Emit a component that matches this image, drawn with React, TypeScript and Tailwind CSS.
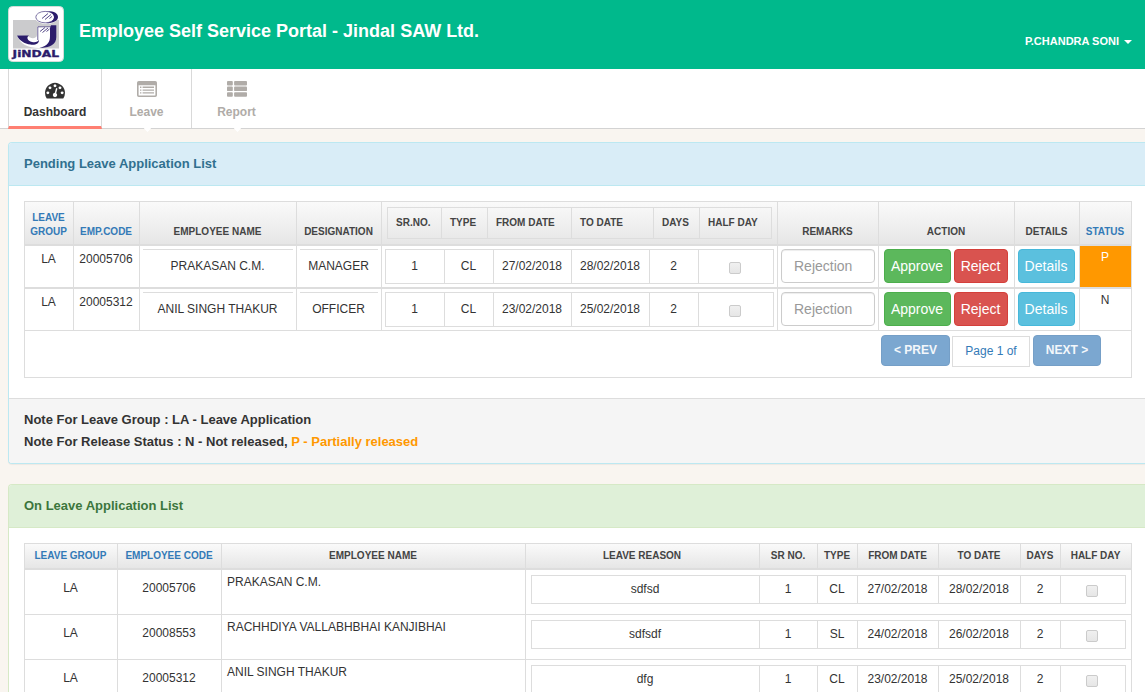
import type { ReactNode } from "react";

const LINE = "border-[#dddddd]";

function Logo() {
  return (
    <svg width="56" height="56" viewBox="0 0 56 56" className="block">
      <rect x="0.5" y="0.5" width="55" height="55" rx="4" fill="#ffffff" stroke="#d3dcd9" />
      <rect x="5" y="14" width="46" height="28.5" fill="#cbcbcd" />
      <ellipse cx="38.5" cy="11.2" rx="11.5" ry="6.8" fill="#ffffff" />
      <path d="M38 5C46 4.6 50.2 7.6 50 11.2C49.8 14.8 45.6 17.2 38 17.2C43.4 16.2 46 14 46 11.2C46 8 43 5.8 38 5Z" fill="#2b1c6b" />
      <ellipse cx="37.2" cy="11.1" rx="9.4" ry="5.7" fill="none" stroke="#2b1c6b" strokeWidth="0.6" />
      <path d="M34 12.5L40 7.5M37 13.5L43 8.5M41.5 12.5L44 10.4" stroke="#2b1c6b" strokeWidth="0.8" />
      <path d="M29 20.5H48V31C48 38.5 42 42 31 42C20 42 12 38 9 29.5L20 30C22 33 29 33 29 29Z" fill="#ffffff" />
      <path d="M43 19.2H48.3V31C48.3 38.5 42 42 31.5 42C40 39.5 42 36 42 30V22Z" fill="#2b1c6b" />
      <path d="M9 29.4H21C18 31 19.5 35 24 36C27.5 36.7 30.2 35.8 31 33.8C31.4 37.4 27.4 39.4 22.5 38.6C16.4 37.6 11 34.4 9 29.4Z" fill="#2b1c6b" />
      <path d="M29.8 34V20.8H43" fill="none" stroke="#2b1c6b" strokeWidth="0.7" />
      <path d="M32 25.5L37 21.5M34.5 26.5L40 22M38.5 25.5L41.5 23" stroke="#2b1c6b" strokeWidth="0.8" />
      <text x="4.6" y="51.3" textLength="46.5" lengthAdjust="spacingAndGlyphs" fill="#2b1c6b" stroke="#2b1c6b" strokeWidth="0.3" className="font-['DejaVu_Sans','Liberation_Sans',sans-serif] text-[8px] font-bold">
        JiNDAL
      </text>
    </svg>
  );
}

function GaugeIcon() {
  return (
    <svg width="20" height="20" viewBox="0 0 1792 1792" fill="currentColor" className="block">
      <path d="M384 1152q0-53-37.5-90.5t-90.5-37.5-90.5 37.5-37.5 90.5 37.5 90.5 90.5 37.5 90.5-37.5 37.5-90.5zm192-448q0-53-37.5-90.5t-90.5-37.5-90.5 37.5-37.5 90.5 37.5 90.5 90.5 37.5 90.5-37.5 37.5-90.5zm428 481l101-382q6-26-7.5-48.5t-38.5-29.5-48 6.5-30 39.5l-101 382q-60 5-107 43.5t-63 98.5q-20 77 20 146t117 89 146-20 89-117q16-60-6-117t-72-91zm660-33q0-53-37.5-90.5t-90.5-37.5-90.5 37.5-37.5 90.5 37.5 90.5 90.5 37.5 90.5-37.5 37.5-90.5zm-640-640q0-53-37.5-90.5t-90.5-37.5-90.5 37.5-37.5 90.5 37.5 90.5 90.5 37.5 90.5-37.5 37.5-90.5zm448 192q0-53-37.5-90.5t-90.5-37.5-90.5 37.5-37.5 90.5 37.5 90.5 90.5 37.5 90.5-37.5 37.5-90.5zm320 448q0 261-141 483-19 29-54 29h-1402q-35 0-54-29-141-221-141-483 0-182 71-348t191-286 286-191 348-71 348 71 286 191 191 286 71 348z" />
    </svg>
  );
}

function ListAltIcon() {
  return (
    <svg width="20" height="20" viewBox="0 0 20 20" fill="currentColor" className="block">
      <path fillRule="evenodd" d="M1.8 1H18.2Q20 1 20 2.8V15.2Q20 17 18.2 17H1.8Q0 17 0 15.2V2.8Q0 1 1.8 1ZM1.6 5.2V14.9Q1.6 15.5 2.2 15.5H17.8Q18.4 15.5 18.4 14.9V5.2Z" />
      <path d="M3 6.6H4.4V8H3ZM3 9.4H4.4V10.8H3ZM3 12.2H4.4V13.6H3ZM5.6 6.6H17V8H5.6ZM5.6 9.4H17V10.8H5.6ZM5.6 12.2H17V13.6H5.6Z" />
    </svg>
  );
}

function ThListIcon() {
  return (
    <svg width="20" height="20" viewBox="0 0 20 20" fill="currentColor" className="block">
      {[1, 6.6, 12.2].map((y) => (
        <g key={y}>
          <rect x="0" y={y} width="5.8" height="4.5" rx="0.9" />
          <rect x="7.1" y={y} width="12.9" height="4.5" rx="0.9" />
        </g>
      ))}
    </svg>
  );
}

function CheckBox() {
  return (
    <span className="block h-3 w-3 rounded-[2px] border border-[#cbcbcb] bg-gradient-to-b from-[#f0f0f0] to-[#e6e6e6]" />
  );
}

function Th({ children, blue, className = "" }: { children: ReactNode; blue?: boolean; className?: string }) {
  return (
    <div className={`flex items-end justify-center border-r pr-px ${LINE} text-center ${blue ? "text-[#337ab7]" : ""} ${className}`}>
      {children}
    </div>
  );
}

const pending = [
  { code: "20005706", name: "PRAKASAN C.M.", role: "MANAGER", from: "27/02/2018", to: "28/02/2018", status: "P" },
  { code: "20005312", name: "ANIL SINGH THAKUR", role: "OFFICER", from: "23/02/2018", to: "25/02/2018", status: "N" },
];

const onLeave = [
  { code: "20005706", name: "PRAKASAN C.M.", reason: "sdfsd", type: "CL", from: "27/02/2018", to: "28/02/2018" },
  { code: "20008553", name: "RACHHDIYA VALLABHBHAI KANJIBHAI", reason: "sdfsdf", type: "SL", from: "24/02/2018", to: "26/02/2018" },
  { code: "20005312", name: "ANIL SINGH THAKUR", reason: "dfg", type: "CL", from: "23/02/2018", to: "25/02/2018" },
];

const PENDING_COLS = "grid grid-cols-[49px_66px_157px_85px_396px_101px_136px_65px_52px]";
const LEAVE_COLS = "grid grid-cols-[93px_104px_304px_234px_58px_40px_81px_82px_40px_71px]";
const HEAD = "border-b-2 bg-gradient-to-b from-[#fafafa] to-[#e6e6e6] text-[10px] font-bold text-[#444444]";
const BTN = "h-[34px] shrink-0 rounded-[4px] border pr-px text-center text-[14px] leading-[33px] text-white";

function PendingTable() {
  return (
    <div className={`w-[1108px] border-l border-t ${LINE}`}>
      <div className={`${PENDING_COLS} h-[44px] ${LINE} ${HEAD} leading-[14px]`}>
        <Th blue className="pb-[5px]">LEAVE<br />GROUP</Th>
        <Th blue className="pb-[5px]">EMP.CODE</Th>
        <Th className="pb-[5px]">EMPLOYEE NAME</Th>
        <Th className="pb-[5px]">DESIGNATION</Th>
        <div className={`border-r ${LINE} pl-[5px] pt-[5px]`}>
          <div className={`grid h-8 w-[385px] grid-cols-[54px_46px_84px_82px_46px_72px] border-l border-y ${LINE} leading-5`}>
            {["SR.NO.", "TYPE", "FROM DATE", "TO DATE", "DAYS", "HALF DAY"].map((t) => (
              <div key={t} className={`border-r ${LINE} whitespace-nowrap pl-2 pt-[5px]`}>{t}</div>
            ))}
          </div>
        </div>
        <Th className="pb-[5px]">REMARKS</Th>
        <Th className="pb-[5px]">ACTION</Th>
        <Th className="pb-[5px]">DETAILS</Th>
        <Th blue className="pb-[5px]">STATUS</Th>
      </div>
      {pending.map((r, i) => (
        <div key={r.code} className={`${PENDING_COLS} ${LINE} text-center ${i === 0 ? "h-[43px] border-b-2" : "h-[42px] border-b"}`}>
          <div className={`border-r ${LINE} pr-px pt-[3px]`}>LA</div>
          <div className={`border-r ${LINE} pr-px pt-[3px]`}>{r.code}</div>
          <div className={`border-r ${LINE} px-[3px] pt-[3px]`}>
            <div className={`border-t ${LINE} pr-px pt-[6px]`}>{r.name}</div>
          </div>
          <div className={`border-r ${LINE} px-[3px] pt-[3px]`}>
            <div className={`border-t ${LINE} pr-px pt-[6px]`}>{r.role}</div>
          </div>
          <div className={`border-r ${LINE} pl-[3px] pt-[3px]`}>
            <div className={`grid h-[35px] w-[389px] grid-cols-[59px_49px_78px_78px_49px_75px] border-l border-y ${LINE}`}>
              {["1", "CL", r.from, r.to, "2"].map((t, k) => (
                <div key={k} className={`border-r ${LINE} pr-px pt-[6px]`}>{t}</div>
              ))}
              <div className={`flex justify-center border-r ${LINE} pr-[2px] pt-3`}><CheckBox /></div>
            </div>
          </div>
          <div className={`border-r ${LINE} p-[3px]`}>
            <input placeholder="Rejection" className="block h-[34px] w-[94px] rounded-[4px] border border-[#cccccc] bg-white px-3 text-[14px] shadow-[inset_0_1px_1px_rgba(0,0,0,0.075)] placeholder:text-[#999999]" />
          </div>
          <div className={`flex gap-[3px] border-r ${LINE} pl-[5px] pt-[3px]`}>
            <button className={`${BTN} w-[67px] border-[#4cae4c] bg-[#5cb85c]`}>Approve</button>
            <button className={`${BTN} w-[54px] border-[#d43f3a] bg-[#d9534f]`}>Reject</button>
          </div>
          <div className={`flex border-r ${LINE} pl-[3px] pt-[3px]`}>
            <button className={`${BTN} w-[57px] border-[#46b8da] bg-[#5bc0de]`}>Details</button>
          </div>
          <div className={`border-r ${LINE} pr-px pt-px ${r.status === "P" ? "bg-[#ff9800] text-white" : ""}`}>{r.status}</div>
        </div>
      ))}
      <div className={`flex h-[47px] border-b border-r ${LINE} pl-[856px] pt-1`}>
        <button className="h-[31px] w-[69px] rounded-[4px] border border-[#759fc7] bg-[#7ba7d0] pb-px text-[12px] font-bold leading-7 text-[#f3f7fb]">&lt; PREV</button>
        <div className={`ml-[2px] mt-px h-[31px] w-[78px] border ${LINE} bg-white text-center leading-7 text-[#337ab7]`}>Page 1 of</div>
        <button className="ml-[3px] h-[31px] w-[68px] rounded-[4px] border border-[#759fc7] bg-[#7ba7d0] pb-px text-[12px] font-bold leading-7 text-[#f3f7fb]">NEXT &gt;</button>
      </div>
    </div>
  );
}

function OnLeaveTable() {
  return (
    <div className={`w-[1108px] border-l border-t ${LINE}`}>
      <div className={`${LEAVE_COLS} h-[26px] ${LINE} ${HEAD} leading-5`}>
        {["LEAVE GROUP", "EMPLOYEE CODE", "EMPLOYEE NAME", "LEAVE REASON", "SR NO.", "TYPE", "FROM DATE", "TO DATE", "DAYS", "HALF DAY"].map((t, i) => (
          <Th key={t} blue={i < 2} className="whitespace-nowrap pb-[2px]">{t}</Th>
        ))}
      </div>
      {onLeave.map((r) => (
        <div key={r.code} className={`grid h-[45px] grid-cols-[93px_104px_304px_606px] border-b ${LINE} text-center`}>
          <div className={`border-r ${LINE} pr-px pt-2`}>LA</div>
          <div className={`border-r ${LINE} pr-px pt-2`}>{r.code}</div>
          <div className={`border-r ${LINE} pl-[5px] pt-[2px] text-left`}>{r.name}</div>
          <div className={`border-r ${LINE} pl-[5px] pt-[5px]`}>
            <div className={`grid h-[29px] w-[595px] grid-cols-[228px_58px_40px_81px_82px_40px_65px] border-l border-y ${LINE}`}>
              {[r.reason, "1", r.type, r.from, r.to, "2"].map((t, k) => (
                <div key={k} className={`border-r ${LINE} pr-px pt-[3px]`}>{t}</div>
              ))}
              <div className={`flex justify-center border-r ${LINE} pr-[2px] pt-[9px]`}><CheckBox /></div>
            </div>
          </div>
        </div>
      ))}
    </div>
  );
}

export default function App() {
  return (
    <div className="flex h-[692px] w-[1145px] flex-col overflow-hidden bg-[#f9f5f0] font-['Liberation_Sans',Arial,sans-serif] text-[12px] leading-5 text-[#333333]">
      <header className="flex h-[69px] shrink-0 bg-[#00b98c] pl-2 pr-[13px] text-white">
        <div className="pt-[6px]"><Logo /></div>
        <h1 className="ml-[15px] pt-[21px] text-[18px] font-bold leading-5">Employee Self Service Portal - Jindal SAW Ltd.</h1>
        <div className="ml-auto flex pt-[31px] text-[11px] font-bold">
          <span>P.CHANDRA SONI</span>
          <span className="ml-[5px] mt-[9px] h-0 w-0 border-x-4 border-t-4 border-x-transparent border-t-white" />
        </div>
      </header>
      <nav className="flex h-[60px] shrink-0 border-b border-[#d3d3d3] bg-white pl-2 text-[12px] font-bold text-[#b0aca8]">
        <div className="-mb-px flex w-[94px] flex-col items-center border-b-[3px] border-l border-r border-b-[#ff7f72] border-l-[#d9d9d9] border-r-[#d9d9d9] pt-[11px] text-[#333333]">
          <GaugeIcon />
          <span className="mt-[2px] leading-5">Dashboard</span>
        </div>
        <div className="relative flex w-[90px] flex-col items-center border-r border-[#d9d9d9] pt-[11px]">
          <ListAltIcon />
          <span className="mt-[2px]">Leave</span>
          <span className="absolute -bottom-[3px] left-[43px] h-[5px] w-[5px] rotate-45 bg-white" />
        </div>
        <div className="relative flex w-[90px] flex-col items-center pt-[11px]">
          <ThListIcon />
          <span className="mt-[2px] pr-px">Report</span>
          <span className="absolute -bottom-[3px] left-[43px] h-[5px] w-[5px] rotate-45 bg-white" />
        </div>
      </nav>
      <main className="shrink-0 pl-2 pt-[13px]">
        <section className="h-[322px] rounded-l-[4px] border-y border-l border-[#bce8f1] bg-white shadow-[0_1px_1px_rgba(0,0,0,0.05)]">
          <h2 className="h-[43px] rounded-tl-[3px] border-b border-[#bce8f1] bg-[#d9edf7] pl-[15px] pt-[10px] text-[13px] font-bold leading-[22px] text-[#31708f]">Pending Leave Application List</h2>
          <div className="h-[212px] pl-[15px] pt-[15px]"><PendingTable /></div>
          <div className="h-[65px] rounded-bl-[3px] border-t border-[#dddddd] bg-[#f5f5f5] pl-[15px] pt-[10px] text-[13px] font-bold leading-[22px]">
            <p>Note For Leave Group : LA - Leave Application</p>
            <p>Note For Release Status : N - Not released, <span className="text-[#ff9800]">P - Partially released</span></p>
          </div>
        </section>
        <section className="mt-5 rounded-tl-[4px] border-l border-t border-[#d6e9c6] bg-white">
          <h2 className="h-[43px] rounded-tl-[3px] border-b border-[#d6e9c6] bg-[#dff0d8] pl-[15px] pt-[10px] text-[13px] font-bold leading-[22px] text-[#3c763d]">On Leave Application List</h2>
          <div className="pl-[15px] pt-[15px]"><OnLeaveTable /></div>
        </section>
      </main>
    </div>
  );
}
